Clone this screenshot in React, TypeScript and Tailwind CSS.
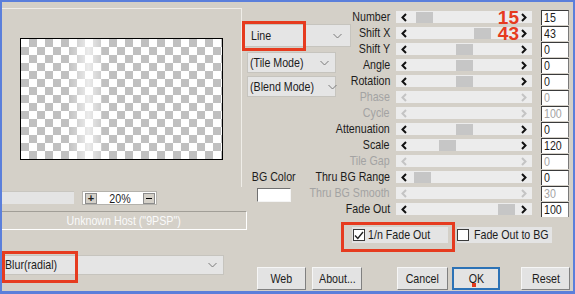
import React from "react";

const F = "font-['Liberation_Sans',Arial,sans-serif]";

function T({ children, o = "origin-left", cls = "" }: { children: React.ReactNode; o?: string; cls?: string }) {
  return <span className={`inline-block whitespace-nowrap scale-x-[0.82] ${o} ${cls}`}>{children}</span>;
}

function Arrow({ dir, disabled }: { dir: "l" | "r"; disabled?: boolean }) {
  return (
    <svg width="6" height="9" viewBox="0 0 6 9" className="shrink-0">
      <polyline
        points={dir === "l" ? "5,1 1.5,4.5 5,8" : "1,1 4.5,4.5 1,8"}
        fill="none"
        stroke={disabled ? "#c4c4c4" : "#111"}
        strokeWidth="2"
      />
    </svg>
  );
}

function DropChevron() {
  return (
    <svg width="9" height="6" viewBox="0 0 9 6" className="shrink-0">
      <polyline points="0.5,1 4.5,5 8.5,1" fill="none" stroke="#7a7a7a" strokeWidth="1" />
    </svg>
  );
}

type Row = {
  label: string;
  value: string;
  thumb: number | null;
  disabled?: boolean;
  big?: string;
};

const rows: Row[] = [
  { label: "Number", value: "15", thumb: 20, big: "15" },
  { label: "Shift X", value: "43", thumb: 78, big: "43" },
  { label: "Shift Y", value: "0", thumb: 60 },
  { label: "Angle", value: "0", thumb: 60 },
  { label: "Rotation", value: "0", thumb: 60 },
  { label: "Phase", value: "0", thumb: null, disabled: true },
  { label: "Cycle", value: "100", thumb: null, disabled: true },
  { label: "Attenuation", value: "0", thumb: 60 },
  { label: "Scale", value: "120", thumb: 43 },
  { label: "Tile Gap", value: "0", thumb: null, disabled: true },
  { label: "Thru BG Range", value: "0", thumb: 18 },
  { label: "Thru BG Smooth", value: "30", thumb: null, disabled: true },
  { label: "Fade Out", value: "100", thumb: 102 },
];

function SliderRow({ r }: { r: Row }) {
  return (
    <div className="flex items-center h-[16px]">
      <div
        className={`w-[38px] flex justify-end whitespace-nowrap leading-[14px] ${
          r.disabled ? "text-[#a3a3a3]" : "text-[#1c1c1c]"
        }`}
      >
        <T o="origin-right">{r.label}</T>
      </div>
      <div className="ml-[6px] w-[136px] h-[12px] bg-[#ececec] relative flex items-center justify-between px-[5px]">
        {r.thumb !== null && (
          <div className="absolute top-[1px] h-[11px] w-[17px] bg-[#c6c6c6]" style={{ left: r.thumb }} />
        )}
        <Arrow dir="l" disabled={r.disabled} />
        <Arrow dir="r" disabled={r.disabled} />
        {r.big && (
          <span className="absolute right-[13px] top-0 h-[13px] text-[19px] leading-[13px] font-bold text-[#e63b1f]">
            {r.big}
          </span>
        )}
      </div>
      <div
        className={`ml-[9px] w-[28px] h-[15px] bg-white border-l border-t border-r border-l-[#3a3a3a] border-t-[#3a3a3a] border-r-[#7a7a7a] pl-[2px] leading-[14px] ${
          r.disabled ? "text-[#a3a3a3]" : "text-[#1c1c1c]"
        }`}
      >
        <T>{r.value}</T>
      </div>
    </div>
  );
}

function Btn({ label, cls, ok }: { label: string; cls: string; ok?: boolean }) {
  return (
    <div
      className={`${cls} h-[23px] flex items-center justify-center relative ${
        ok
          ? "border-2 border-[#2c72b6] bg-[#e3e3e3]"
          : "border border-t-[#f6f6f6] border-l-[#f6f6f6] border-r-[#808080] border-b-[#808080] bg-[#e3e3e3]"
      }`}
    >
      <T o="origin-center">{label}</T>
      {ok && <div className="absolute left-[18px] top-[14px] w-[4px] h-[4px] bg-[#e23a1c]" />}
    </div>
  );
}

function Drop({ label, cls }: { label: string; cls: string }) {
  return (
    <div className={`${cls} bg-[#e5e5e5] border border-[#c6c4be] flex items-center justify-between pl-[2px] pr-[6px]`}>
      <T>{label}</T>
      <DropChevron />
    </div>
  );
}

export default function App() {
  return (
    <div
      className={`w-[575px] h-[294px] bg-[#d4d0c8] border-t-2 border-x-2 border-b-[3px] border-[#5b7fdb] flex overflow-hidden ${F} text-[13px] text-[#1c1c1c]`}
    >
      {/* Left column */}
      <div className="w-[240px] shrink-0 flex flex-col">
        <div className="h-[6px]" />
        <div className="h-[179px] border-t border-r border-[#efede8] pt-[29px] pl-[18px]">
          <div className="w-[203px] h-[122px] border border-black relative bg-[conic-gradient(#c0c0c0_25%,#ffffff_0_50%,#c0c0c0_0_75%,#ffffff_0)] bg-[length:16px_16px]">
            <div className="absolute top-0 bottom-0 left-[47px] w-[34px] bg-[linear-gradient(90deg,rgba(255,255,255,0),rgba(255,255,255,0.7)_60%,rgba(255,255,255,0.2))]" />
          </div>
        </div>
        <div className="mt-[4px] flex items-start h-[14px]">
          <div className="w-[72px] h-[13px] bg-[#e4e4e4] border-t border-[#c8c6c0]" />
          <div className="ml-[8px] w-[75px] h-[14px] bg-white border border-[#b4b2ac] flex items-center">
            <div className="ml-[2px] w-[12px] h-[11px] bg-[#d4d0c8] border border-[#8c8c8c] flex items-center justify-center text-[11px] leading-none font-bold">
              +
            </div>
            <div className="flex-1 flex justify-center leading-none">
              <T o="origin-center">20%</T>
            </div>
            <div className="mr-[1px] w-[12px] h-[11px] bg-[#d4d0c8] border border-[#8c8c8c] flex items-center justify-center">
              <div className="w-[6px] h-[1px] bg-black" />
            </div>
          </div>
        </div>
        <div className="mt-[6px] h-[19px] -mr-[5px] border-t border-b border-r border-t-[#a19e97] border-b-white border-r-white flex items-center justify-center text-[#fafafa]">
          <T o="origin-center">Unknown Host ("9PSP")</T>
        </div>
        <div className="mt-[25px] relative">
          <Drop label="Blur(radial)" cls="w-[222px] h-[20px]" />
          <div className="absolute left-0 top-[-4px] w-[76px] h-[32px] border-[3px] border-[#e63b1f]" />
        </div>
      </div>

      {/* Right section */}
      <div className="flex-1 flex flex-col">
        <div className="pt-[7px] flex">
          {/* middle column */}
          <div className="w-[110px] shrink-0 relative flex flex-col">
            <div className="mt-[15px] ml-[2px] w-[107px] h-[23px] bg-[#e5e5e5] border border-[#c6c4be] flex items-center justify-between pl-[6px] pr-[8px]">
              <T>Line</T>
              <DropChevron />
            </div>
            <div className="absolute left-0 top-[12px] w-[64px] h-[30px] border-[3px] border-[#e63b1f]" />
            <Drop label="(Tile Mode)" cls="mt-[5px] ml-[5px] w-[89px] h-[21px]" />
            <Drop label="(Blend Mode)" cls="mt-[3px] ml-[5px] w-[89px] h-[21px]" />
            <div className="mt-[73px] ml-[10px] w-[44px] h-[14px] leading-[14px] flex justify-center">
              <T o="origin-center">BG Color</T>
            </div>
            <div className="mt-[4px] ml-[15px] w-[34px] h-[14px] bg-white border border-t-[#707070] border-l-[#707070] border-r-[#f4f4f4] border-b-[#f4f4f4]" />
          </div>
          {/* rows */}
          <div className="flex-1 flex flex-col">
            {rows.map((r) => (
              <SliderRow key={r.label} r={r} />
            ))}
          </div>
        </div>

        {/* checkbox row */}
        <div className="mt-[10px] h-[16px] flex relative">
          <div className="ml-[110px] w-[96px] h-[16px] bg-[#e4e4e4] flex items-center">
            <div className="ml-[1px] w-[12px] h-[12px] shrink-0 bg-white border border-[#3a3a3a] flex items-center justify-center">
              <svg width="10" height="9" viewBox="0 0 10 9">
                <polyline points="1,4.5 3.8,7.5 9,1" fill="none" stroke="#222" strokeWidth="1.4" />
              </svg>
            </div>
            <span className="ml-[3px]">
              <T>1/n Fade Out</T>
            </span>
          </div>
          <div className="ml-[9px] w-[95px] h-[16px] bg-[#e4e4e4] flex items-center">
            <div className="w-[12px] h-[12px] shrink-0 bg-white border border-[#3a3a3a]" />
            <span className="ml-[5px]">
              <T>Fade Out to BG</T>
            </span>
          </div>
          <div className="absolute left-[99px] top-[-5px] w-[114px] h-[30px] border-[3px] border-[#e63b1f]" />
        </div>

        {/* buttons */}
        <div className="mt-[24px] flex">
          <Btn label="Web" cls="ml-[15px] w-[49px]" />
          <Btn label="About..." cls="ml-[6px] w-[50px]" />
          <Btn label="Cancel" cls="ml-[35px] w-[51px]" />
          <Btn label="OK" cls="ml-[4px] w-[48px]" ok />
          <Btn label="Reset" cls="ml-[21px] w-[49px]" />
        </div>
      </div>
    </div>
  );
}
